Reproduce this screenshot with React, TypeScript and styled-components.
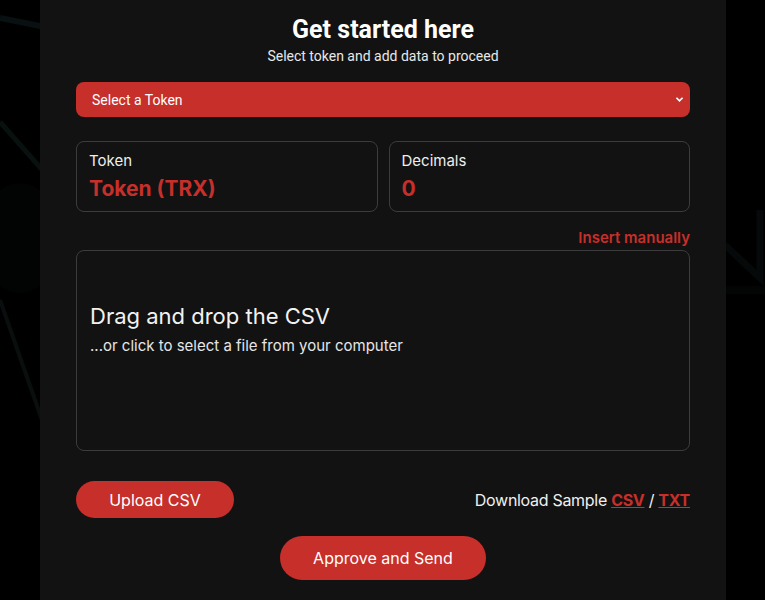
import React from "react";
import styled, { createGlobalStyle } from "styled-components";

const GlobalStyle = createGlobalStyle`
  html, body {
    margin: 0;
    padding: 0;
    background: #000;
    font-family: Inter, "Noto Sans", sans-serif;
  }
  * { box-sizing: border-box; }
`;

const RED = "#c62f2a";

export default function App() {
  return (
    <Page>
      <GlobalStyle />
      <Backdrop viewBox="0 0 765 600" preserveAspectRatio="none">
        <path d="M0 18 L60 30" stroke="#081011" strokeWidth="6" />
        <path d="M0 122 L60 190" stroke="#081010" strokeWidth="5" />
        <ellipse cx="20" cy="238" rx="40" ry="55" fill="#020404" />
        <path d="M0 300 L42 420" stroke="#0b0e0e" strokeWidth="4" />
        <path d="M725 245 L760 278 L760 210" stroke="#060909" strokeWidth="7" fill="none" />
        <path d="M725 290 L765 290" stroke="#030505" strokeWidth="8" />
      </Backdrop>
      <Panel>
        <Header>
          <Title>Get started here</Title>
          <Subtitle>Select token and add data to proceed</Subtitle>
        </Header>

        <SelectWrap>
          <TokenSelect defaultValue="">
            <option value="">Select a Token</option>
          </TokenSelect>
          <Chevron viewBox="0 0 10 8">
            <path d="M1.5 2 L5 5.5 L8.5 2" stroke="#fff" strokeWidth="2" fill="none" />
          </Chevron>
        </SelectWrap>

        <InfoRow>
          <InfoCard>
            <InfoLabel>Token</InfoLabel>
            <InfoValue>Token (TRX)</InfoValue>
          </InfoCard>
          <InfoCard>
            <InfoLabel>Decimals</InfoLabel>
            <InfoValue>0</InfoValue>
          </InfoCard>
        </InfoRow>

        <ManualLink>Insert manually</ManualLink>

        <DropZone>
          <DropTitle>Drag and drop the CSV</DropTitle>
          <DropHint>...or click to select a file from your computer</DropHint>
        </DropZone>

        <ActionRow>
          <PillButton $w={158} $h={37}>Upload CSV</PillButton>
          <Samples>
            Download Sample <SampleLink>CSV</SampleLink> / <SampleLink>TXT</SampleLink>
          </Samples>
        </ActionRow>

        <SubmitRow>
          <PillButton $w={206} $h={44}>Approve and Send</PillButton>
        </SubmitRow>
      </Panel>
    </Page>
  );
}

// -------------------------- style --------------------------

const Page = styled.div`
  position: relative;
  min-height: 600px;
  display: flex;
  justify-content: center;
  overflow: hidden;
`;

const Backdrop = styled.svg`
  position: absolute;
  inset: 0;
  width: 100%;
  height: 100%;
  z-index: 0;
`;

const Panel = styled.main`
  position: relative;
  z-index: 1;
  width: 686px;
  margin-left: 1px;
  min-height: 600px;
  background: #121212;
  padding: 14px 36px 20px;
  display: flex;
  flex-direction: column;
`;

const Header = styled.header`
  display: flex;
  flex-direction: column;
  align-items: center;
`;

const Title = styled.h1`
  margin: 0;
  padding-top: 1px;
  font-family: Roboto, sans-serif;
  font-weight: 700;
  font-size: 25px;
  line-height: 30px;
  color: #fff;
`;

const Subtitle = styled.p`
  margin: 2px 0 0;
  font-family: Roboto, sans-serif;
  font-size: 14px;
  line-height: 18px;
  color: #e8e8e8;
`;

const SelectWrap = styled.div`
  position: relative;
  margin-top: 17px;
`;

const TokenSelect = styled.select`
  appearance: none;
  width: 100%;
  height: 35px;
  border: none;
  border-radius: 8px;
  background: ${RED};
  color: #fff;
  font-family: Roboto, sans-serif;
  font-size: 14px;
  padding: 0 16px;
  outline: none;
`;

const Chevron = styled.svg`
  position: absolute;
  right: 6px;
  top: 14px;
  width: 9px;
  height: 7px;
  pointer-events: none;
`;

const InfoRow = styled.div`
  display: grid;
  grid-template-columns: 1fr 1fr;
  gap: 11px;
  margin-top: 24px;
`;

const InfoCard = styled.div`
  height: 71px;
  border: 1px solid #3c3c3c;
  border-radius: 8px;
  padding: 9px 12px;
  display: flex;
  flex-direction: column;
`;

const InfoLabel = styled.span`
  font-size: 15px;
  line-height: 19px;
  color: #eee;
`;

const InfoValue = styled.span`
  margin-top: 7px;
  font-size: 21px;
  font-weight: 700;
  line-height: 24px;
  color: ${RED};
`;

const ManualLink = styled.a`
  align-self: flex-end;
  margin-top: 16px;
  font-size: 15px;
  font-weight: 600;
  line-height: 19px;
  color: ${RED};
  cursor: pointer;
`;

const DropZone = styled.div`
  margin-top: 3px;
  height: 201px;
  border: 1px solid #3c3c3c;
  border-radius: 8px;
  padding: 51px 13px;
  display: flex;
  flex-direction: column;
  cursor: pointer;
`;

const DropTitle = styled.span`
  font-size: 22px;
  line-height: 28px;
  color: #f2f2f2;
`;

const DropHint = styled.span`
  margin-top: 6px;
  font-size: 15px;
  line-height: 19px;
  color: #e6e6e6;
`;

const ActionRow = styled.div`
  display: flex;
  justify-content: space-between;
  align-items: center;
  margin-top: 30px;
`;

const PillButton = styled.button<{ $w: number; $h: number }>`
  width: ${(p) => p.$w}px;
  height: ${(p) => p.$h}px;
  border: none;
  border-radius: 999px;
  background: ${RED};
  color: #fff;
  font-family: Inter, sans-serif;
  font-size: 16px;
  cursor: pointer;
`;

const Samples = styled.div`
  font-size: 16px;
  letter-spacing: -0.3px;
  color: #f0f0f0;
`;

const SampleLink = styled.a`
  color: ${RED};
  font-weight: 700;
  text-decoration: underline;
  cursor: pointer;
`;

const SubmitRow = styled.div`
  display: flex;
  justify-content: center;
  margin-top: 18px;
`;
